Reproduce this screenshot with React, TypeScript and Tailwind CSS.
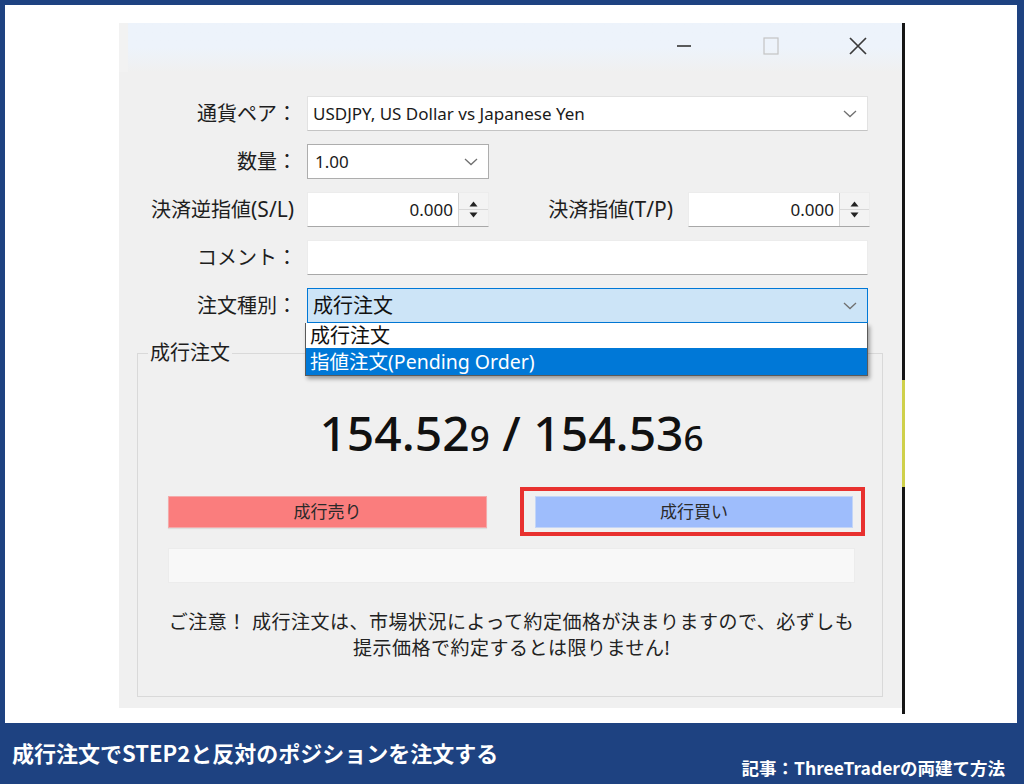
import React from "react";

function Chevron() {
  return (
    <svg width="14" height="8" viewBox="0 0 14 8" className="shrink-0">
      <path d="M1 1 L7 6.5 L13 1" fill="none" stroke="#707070" strokeWidth="1.3" />
    </svg>
  );
}

function Label({ children, w = "w-[178px]" }: { children: React.ReactNode; w?: string }) {
  return <div className={`${w} shrink-0 text-right text-[20px] leading-[28px] text-[#1e1e1e]`}>{children}</div>;
}

function Spin({ className }: { className: string }) {
  return (
    <div className={`${className} h-[35px] flex bg-white border border-[#ececec] border-b-[#a8a8a8]`}>
      <div className="flex-1 flex items-center justify-end pr-[5px] text-[17px] text-[#1a1a1a]">0.000</div>
      <div className="w-[30px] flex flex-col border-l border-[#d4d4d4] bg-[#f3f3f3]">
        <div className="flex-1 flex items-end justify-center pb-[2px] border-b border-[#d8d8d8]">
          <svg width="9" height="6" viewBox="0 0 9 6"><path d="M0.5 5.5 L4.5 0.5 L8.5 5.5 Z" fill="#222" /></svg>
        </div>
        <div className="flex-1 flex items-start justify-center pt-[2px]">
          <svg width="9" height="6" viewBox="0 0 9 6"><path d="M0.5 0.5 L4.5 5.5 L8.5 0.5 Z" fill="#222" /></svg>
        </div>
      </div>
    </div>
  );
}

function Dialog() {
  return (
    <div className="w-[783px] h-[685px] bg-[#f0f0f0] flex flex-col shrink-0">
      {/* title bar */}
      <div className="h-[49px] bg-linear-to-b from-[#edf3fb] via-[#edf3fb] to-[#f0f0f0] flex">
        <div className="w-[9px] bg-[#f2f2f2]" />
        <div className="flex-1 flex justify-end pr-[1px] h-[45px]">
          <div className="w-[87px] flex items-center justify-center">
            <svg width="16" height="4" viewBox="0 0 16 4"><path d="M1 2 H15" stroke="#333" strokeWidth="1.6" /></svg>
          </div>
          <div className="w-[87px] flex items-center justify-center">
            <svg width="16" height="18" viewBox="0 0 16 18"><rect x="1" y="1" width="14" height="16" fill="none" stroke="#c4c4c4" strokeWidth="1.2" /></svg>
          </div>
          <div className="w-[87px] flex items-center justify-center">
            <svg width="20" height="20" viewBox="0 0 20 20"><path d="M2 2 L18 18 M18 2 L2 18" stroke="#3a3a3a" strokeWidth="1.7" /></svg>
          </div>
        </div>
      </div>

      {/* form */}
      <div className="pt-[24px] flex flex-col gap-[13px]">
        <div className="flex items-center h-[35px]">
          <Label>通貨ペア：</Label>
          <div className="ml-[10px] w-[561px] h-[35px] bg-white border border-[#e2e2e2] border-b-[#c4c4c4] flex items-center justify-between pl-[5px] pr-[10px]">
            <span className="text-[17px] text-[#1a1a1a]">USDJPY, US Dollar vs Japanese Yen</span>
            <Chevron />
          </div>
        </div>
        <div className="flex items-center h-[35px]">
          <Label>数量：</Label>
          <div className="ml-[10px] w-[182px] h-[35px] bg-white border border-[#adadad] flex items-center justify-between pl-[7px] pr-[10px]">
            <span className="text-[17px] text-[#1a1a1a]">1.00</span>
            <Chevron />
          </div>
        </div>
        <div className="flex items-center h-[35px]">
          <Label>
            <span className="pr-[3px]">決済逆指値<span className="text-[21px]">(S/L)</span></span>
          </Label>
          <Spin className="ml-[10px] w-[182px]" />
          <Label w="w-[184px]">決済指値<span className="text-[21px]">(T/P)</span></Label>
          <Spin className="ml-[15px] w-[182px]" />
        </div>
        <div className="flex items-center h-[35px]">
          <Label>コメント：</Label>
          <div className="ml-[10px] w-[561px] h-[35px] bg-white border border-[#ececec] border-b-[#a8a8a8]" />
        </div>
        <div className="flex items-center h-[35px]">
          <Label>注文種別：</Label>
          <div className="relative ml-[10px] w-[561px] h-[35px] bg-[#cce4f7] border border-[#0078d7] flex items-center justify-between pl-[5px] pr-[10px]">
            <span className="text-[20px] leading-[28px] text-[#111]">成行注文</span>
            <Chevron />
            <div className="absolute left-[-3px] top-[34px] w-[563px] z-10 shadow-[2px_3px_4px_rgba(0,0,0,0.35)] border border-[#5a5a5a] border-t-0">
              <div className="h-[25px] bg-white flex items-center pl-[4px] text-[20px] leading-[25px] text-[#111]">成行注文</div>
              <div className="h-[27px] bg-[#0078d7] flex items-center pl-[4px] text-[19.5px] leading-[27px] text-white">指値注文(Pending Order)</div>
            </div>
          </div>
        </div>
      </div>

      {/* group box */}
      <fieldset className="mt-[16px] ml-[18px] w-[746px] h-[358px] border border-[#d9d9d9] pl-[10px]">
        <legend className="px-[2px] text-[20px] leading-[28px] text-[#1e1e1e]">成行注文</legend>
        <div className="ml-[20px] w-[687px] flex flex-col">
          <div className="mt-[38px] h-[60px] flex items-center justify-center text-[48px] leading-[60px] font-medium text-[#111] font-['Noto_Sans',sans-serif]">
            <span>
              154.52<span className="text-[35px]">9</span> / 154.53<span className="text-[35px]">6</span>
            </span>
          </div>
          <div className="mt-[31px] flex justify-between">
            <div className="w-[319px] h-[32px] bg-[#fa7d7d] border border-[#f4aaaa] shadow-[0_1px_1px_rgba(0,0,0,0.08)] flex items-center justify-center text-[17px] text-[#2a2a2a]">
              成行売り
            </div>
            <div className="relative mr-[2px]">
              <div className="w-[318px] h-[32px] bg-[#9ebdfc] border border-[#c3d5f7] flex items-center justify-center text-[17px] text-[#2a2a2a]">
                成行買い
              </div>
              <div className="absolute left-[-15px] top-[-9px] right-[-12px] bottom-[-8px] border-[4px] border-[#e8312f]" />
            </div>
          </div>
          <div className="mt-[20px] h-[35px] bg-[#f8f8f8] border border-[#ececec]" />
          <div className="mt-[25px] flex flex-col items-center text-[19px] tracking-[0.5px] leading-[28px] text-[#222]">
            <div>ご注意！ 成行注文は、市場状況によって約定価格が決まりますので、必ずしも</div>
            <div className="-mt-[2px]">提示価格で約定するとは限りません!</div>
          </div>
        </div>
      </fieldset>
    </div>
  );
}

export default function App() {
  return (
    <div className="w-[1024px] h-[784px] bg-[#1e4281] flex flex-col font-['Noto_Sans','Noto_Sans_CJK_JP',sans-serif] overflow-hidden">
      <div className="mt-[5px] ml-[5px] mr-[7px] h-[718px] bg-white flex items-start pl-[114px] pt-[18px]">
        <Dialog />
        <div className="w-[3px] flex flex-col">
          <div className="h-[357px] bg-[#151515]" />
          <div className="h-[107px] bg-[#cfd04a]" />
          <div className="h-[227px] bg-[#151515]" />
        </div>
      </div>
      <div className="flex-1 flex justify-between items-start font-['Noto_Sans_CJK_JP',sans-serif] text-white font-bold">
        <div className="pl-[12px] pt-[16px] text-[22px] leading-[26px]">成行注文でSTEP2と反対のポジションを注文する</div>
        <div className="pr-[19px] pt-[35px] text-[17.5px] leading-[20px]">記事：ThreeTraderの両建て方法</div>
      </div>
    </div>
  );
}
